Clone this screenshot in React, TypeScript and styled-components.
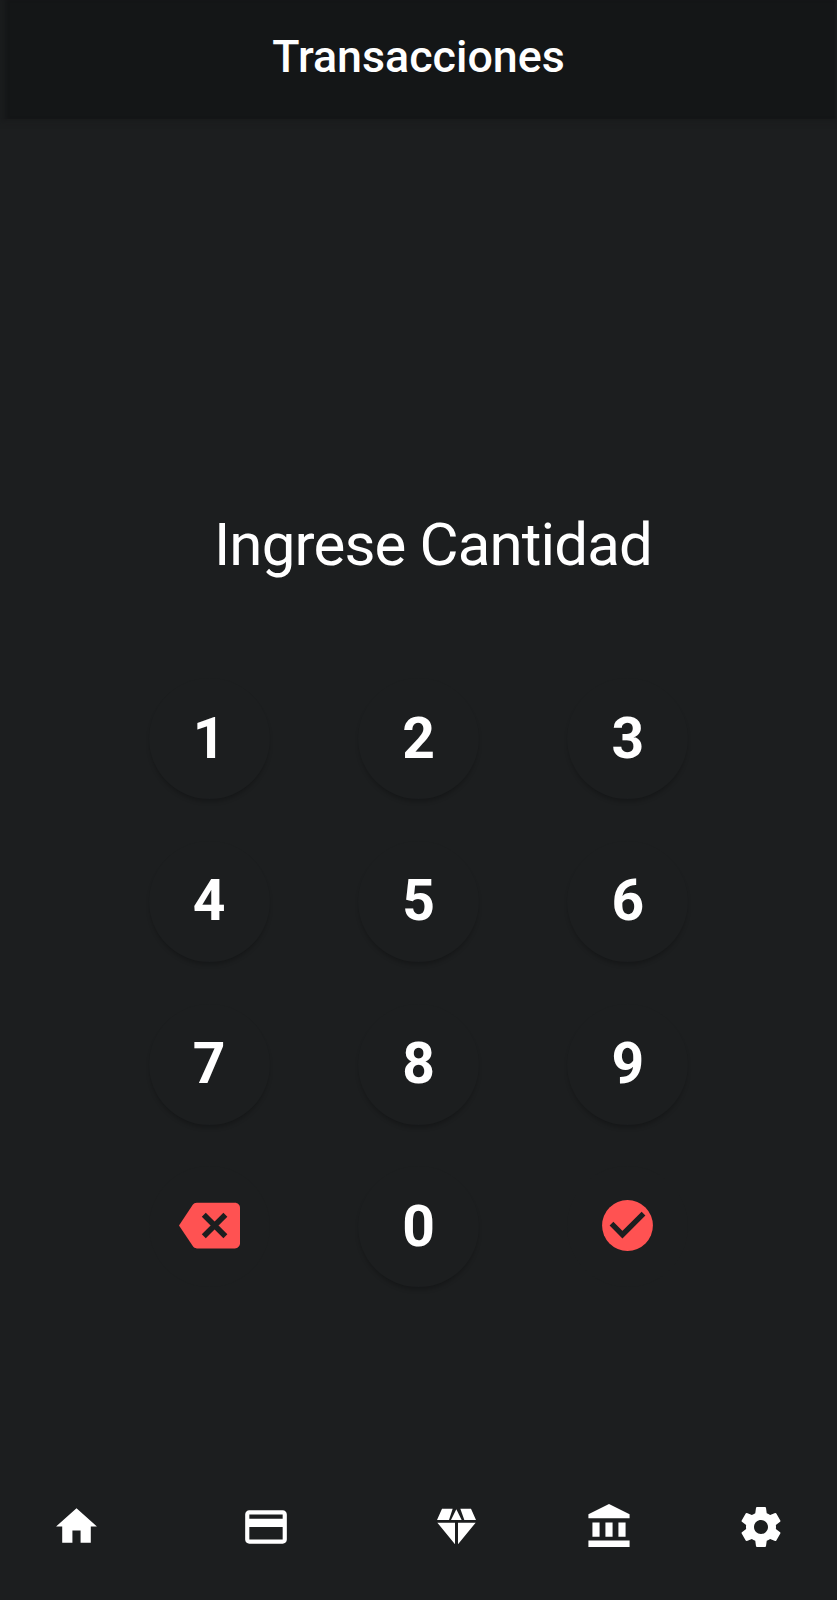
import React from 'react';
import styled, { createGlobalStyle } from 'styled-components';
import { MdHome } from 'react-icons/md';

const GlobalStyle = createGlobalStyle`
  * { box-sizing: border-box; }
  body { margin: 0; background: #1c1e1f; font-family: Roboto, sans-serif; color: #fff; }
`;
const Screen = styled.div`
  display: flex;
  flex-direction: column;
  height: 1600px;
  background: #1c1e1f;
`;
const Header = styled.header`
  height: 119px;
  padding-bottom: 6px;
  display: flex;
  align-items: center;
  justify-content: center;
  background: #141617;
  box-shadow: inset 7px 0 4px -2px #1a1c1d, inset -3px 0 3px -1px #1a1c1d, 0 1px 6px #17191a;
`;
const Title = styled.h1`
  margin: 0;
  font-size: 44.8px;
  line-height: 52px;
  font-weight: 500;
`;
const Prompt = styled.p`
  margin: 391px 0 0 29px;
  text-align: center;
  font-size: 60px;
  line-height: 70px;
  letter-spacing: -0.85px;
`;
const Keypad = styled.main`
  display: grid;
  grid-template-columns: repeat(3, 209.3px);
  grid-auto-rows: 162.8px;
  justify-content: center;
  margin-top: 98px;
`;
const Key = styled.button<{ $flat?: boolean }>`
  width: 121px;
  height: 121px;
  padding: ${(p) => (p.$flat ? '0 0 3px' : '0')};
  border: 0;
  border-radius: 50%;
  place-self: start center;
  display: flex;
  align-items: center;
  justify-content: center;
  background: #1c1e1f;
  color: ${(p) => (p.$flat ? '#ff5252' : '#fff')};
  font: 700 57px/66px Roboto, sans-serif;
  box-shadow: ${(p) => (p.$flat ? 'none' : '0 4px 4px -1px rgba(0, 0, 0, 0.22)')};
`;
const Nav = styled.nav`
  display: grid;
  grid-template-columns: 2fr 3fr 2fr 2fr 2fr;
  place-items: center;
  height: 146px;
  margin-top: auto;
  padding-bottom: 1px;
`;

const Backspace = () => (
  <svg width="61" height="61" viewBox="0 0 24 24">
    <path fill="currentColor" d="M22 3H7c-.69 0-1.23.35-1.59.88L0 12l5.41 8.11c.36.53.9.89 1.59.89h15c1.1 0 2-.9 2-2V5c0-1.1-.9-2-2-2z" />
    <path stroke="#1c1e1f" strokeWidth="2.2" d="m9.75 7.75 8.5 8.5m0-8.5-8.5 8.5" />
  </svg>
);
const Check = () => (
  <svg width="61" height="61" viewBox="0 0 24 24">
    <circle cx="12" cy="12" r="10" fill="currentColor" />
    <path fill="none" stroke="#1c1e1f" strokeWidth="2.1" d="m5.7 11.3 4.3 4.3 8.3-8.3" />
  </svg>
);
const Card = () => (
  <svg width="50" height="50" viewBox="0 0 24 24" fill="currentColor">
    <path d="M20 4H4c-1.11 0-1.99.89-1.99 2L2 18c0 1.11.89 2 2 2h16c1.11 0 2-.89 2-2V6c0-1.11-.89-2-2-2zm0 14H4v-6h16v6zm0-10H4V6h16v2z" />
  </svg>
);
const Diamond = () => (
  <svg width="41" height="37" viewBox="-3 -2 123 111" fill="currentColor">
    <path d="M15 0h32L36 34H0zM70 0h32l15 34H82zM58 2l16 32H42zM1 42h53v65zM63 42h53l-53 65z" />
  </svg>
);
const Bank = () => (
  <svg width="52" height="49" viewBox="-0.5 0 24 24" preserveAspectRatio="none" fill="currentColor">
    <path d="M3.85 10v7h3.3v-7zm6 0v7h3.3v-7zM2 22h19v-3.2H2zm13.85-12v7h3.3v-7zm-4.35-9L2 6v2h19V6z" />
  </svg>
);
const Gear = () => (
  <svg width="48" height="48" viewBox="0 0 24 24" fill="currentColor">
    <path d="M19.43 12.98c.04-.32.07-.64.07-.98s-.03-.66-.07-.98l2.11-1.65c.19-.15.24-.42.12-.64l-2-3.46c-.12-.22-.39-.3-.61-.22l-2.49 1c-.52-.4-1.08-.73-1.69-.98l-.38-2.65C14.46 2.18 14.25 2 14 2h-4c-.25 0-.46.18-.49.42l-.38 2.65c-.61.25-1.17.59-1.69.98l-2.49-1c-.23-.09-.49 0-.61.22l-2 3.46c-.13.22-.07.49.12.64l2.11 1.65c-.04.32-.07.65-.07.98s.03.66.07.98l-2.11 1.65c-.19.15-.24.42-.12.64l2 3.46c.12.22.39.3.61.22l2.49-1c.52.4 1.08.73 1.69.98l.38 2.65c.03.24.24.42.49.42h4c.25 0 .46-.18.49-.42l.38-2.65c.61-.25 1.17-.59 1.69-.98l2.49 1c.23.09.49 0 .61-.22l2-3.46c.12-.22.07-.49-.12-.64l-2.11-1.65zM12 15.5c-1.93 0-3.5-1.57-3.5-3.5s1.57-3.5 3.5-3.5 3.5 1.57 3.5 3.5-1.57 3.5-3.5 3.5z" />
  </svg>
);

export default function App() {
  return (
    <Screen>
      <GlobalStyle />
      <Header><Title>Transacciones</Title></Header>
      <Prompt>Ingrese Cantidad</Prompt>
      <Keypad>
        {['1', '2', '3', '4', '5', '6', '7', '8', '9'].map((n) => <Key key={n}>{n}</Key>)}
        <Key $flat aria-label="Borrar"><Backspace /></Key>
        <Key>0</Key>
        <Key $flat aria-label="Confirmar"><Check /></Key>
      </Keypad>
      <Nav>
        <MdHome size={49} />
        <Card />
        <Diamond />
        <Bank />
        <Gear />
      </Nav>
    </Screen>
  );
}
